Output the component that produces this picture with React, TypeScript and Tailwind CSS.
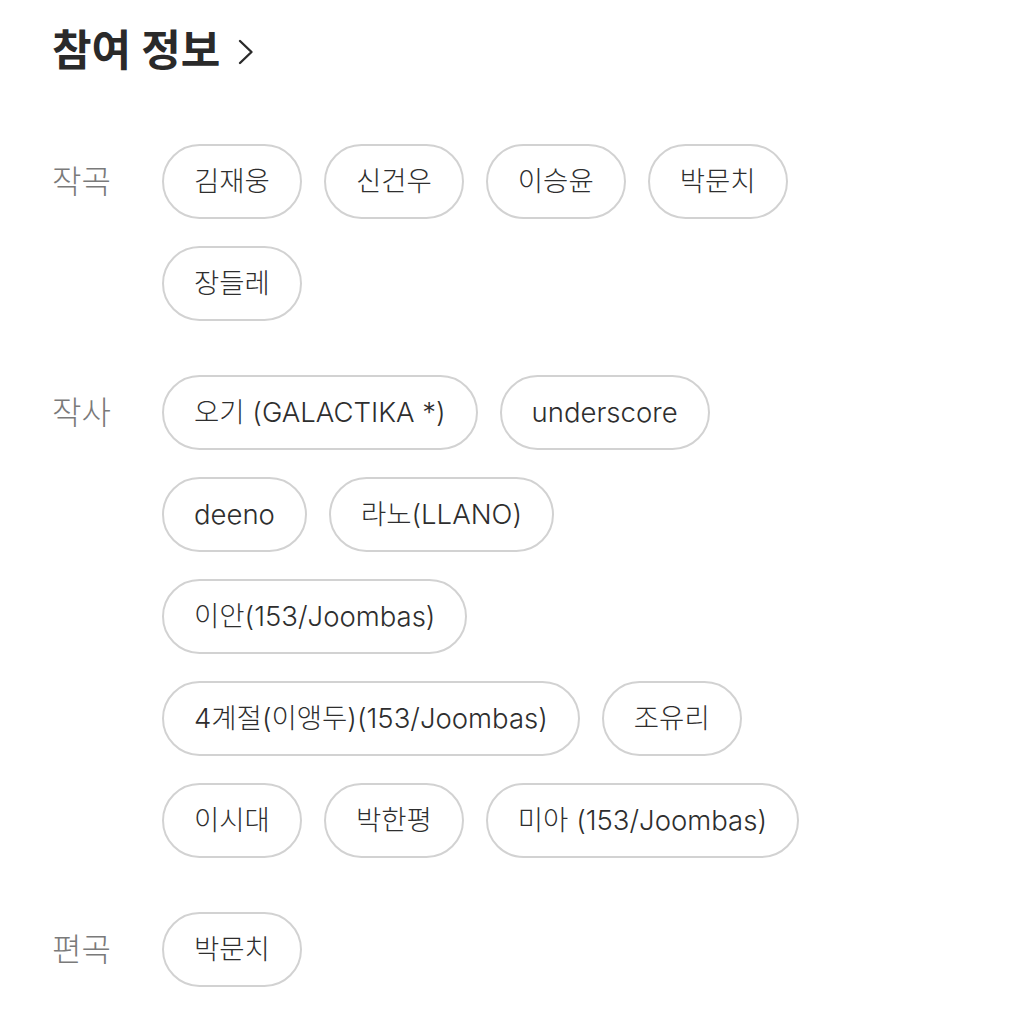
const credits: { role: string; names: string[] }[] = [
  { role: "작곡", names: ["김재웅", "신건우", "이승윤", "박문치", "장들레"] },
  {
    role: "작사",
    names: [
      "오기 (GALACTIKA *)",
      "underscore",
      "deeno",
      "라노(LLANO)",
      "이안(153/Joombas)",
      "4계절(이앵두)(153/Joombas)",
      "조유리",
      "이시대",
      "박한평",
      "미아 (153/Joombas)",
    ],
  },
  { role: "편곡", names: ["박문치"] },
];

function Chevron() {
  return (
    <svg width="20" height="30" viewBox="0 0 20 30" fill="none" className="ml-[16px] mt-1">
      <path d="M4 4 L15.5 15 L4 26" stroke="#2b2b2b" strokeWidth="2.4" strokeLinecap="round" strokeLinejoin="round" />
    </svg>
  );
}

export default function App() {
  return (
    <main
      className="min-h-screen bg-white px-[52px] pt-[24px] pb-10"
      style={{ fontFamily: '"Inter", "Noto Sans CJK KR", sans-serif' }}
    >
      <h2 className="flex items-center text-[43px] font-bold leading-[52px] text-[#2a2a2a]">
        참여 정보
        <Chevron />
      </h2>

      <div className="mt-[68px] flex flex-col gap-[54px]">
        {credits.map((c) => (
          <section key={c.role} className="flex items-start">
            <div className="flex h-[75px] w-[110px] shrink-0 items-center text-[32px] font-light text-[#7a7a7a]">
              {c.role}
            </div>
            <ul className="flex w-[690px] flex-wrap gap-x-[22px] gap-y-[27px]">
              {c.names.map((n) => (
                <li
                  key={n}
                  className="flex h-[75px] items-center rounded-full border-2 border-[#d2d2d2] px-[30px] text-[27.5px] font-light text-[#2e2e2e] whitespace-nowrap"
                >
                  {n}
                </li>
              ))}
            </ul>
          </section>
        ))}
      </div>
    </main>
  );
}
